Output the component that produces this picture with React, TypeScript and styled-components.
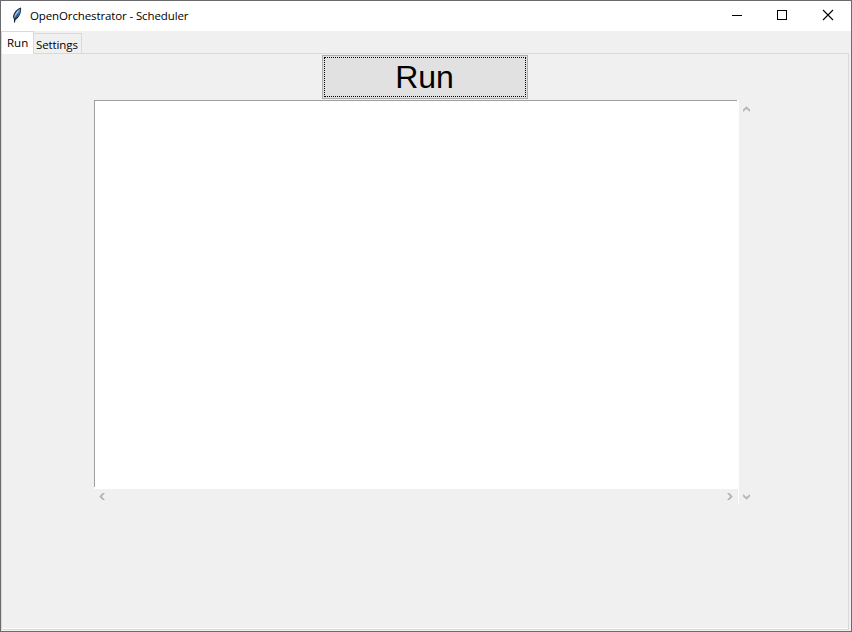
import React from "react";
import styled, { createGlobalStyle } from "styled-components";

const GlobalStyle = createGlobalStyle`
  * { box-sizing: border-box; }
  body { margin: 0; background: #f0f0f0; }
`;

const Window = styled.div`
  width: 852px;
  height: 632px;
  display: flex;
  flex-direction: column;
  background: #f0f0f0;
  border: 1px solid #6b6a6c;
  overflow: hidden;
  color: #000;
  font: 12px/16px "Open Sans", "Noto Sans", sans-serif;
`;

const TitleBar = styled.header`
  display: flex;
  flex: none;
  height: 30px;
  background: #fff;
  padding-left: 8px;
`;

const AppIcon = styled.svg`
  flex: none;
  width: 16px;
  height: 16px;
  margin-top: 6px;
`;

const Title = styled.span`
  flex: 1;
  margin: 7px 0 0 5px;
  font-size: 11.5px;
  letter-spacing: -0.12px;
  white-space: nowrap;
`;

const Caption = styled.button`
  width: 46px;
  height: 30px;
  padding: 0;
  border: 0;
  background: transparent;
  svg { display: block; }
`;

const Tabs = styled.nav`
  display: flex;
  align-items: flex-end;
  flex: none;
  height: 22px;
`;

const Tab = styled.button<{ $active?: boolean }>`
  width: ${(p) => (p.$active ? 33 : 48)}px;
  height: ${(p) => (p.$active ? 22 : 20)}px;
  padding: ${(p) => (p.$active ? "1px 0 1px 5px" : "2px 0 0 2px")};
  border: 1px solid #d9d9d9;
  border-left-width: ${(p) => (p.$active ? 1 : 0)}px;
  border-bottom: 0;
  background: ${(p) => (p.$active ? "#fff" : "#f0f0f0")};
  color: #000;
  font: inherit;
  font-size: 11.5px;
  line-height: 16px;
  letter-spacing: ${(p) => (p.$active ? "0" : "-0.1px")};
  text-align: left;
  white-space: nowrap;
`;

const TabEdge = styled.div`
  flex: none;
  height: 1px;
  width: 848px;
  border-left: 1px solid #d9d9d9;
  background: linear-gradient(to right, #fff 31px, #d9d9d9 31px);
`;

const Pane = styled.main`
  flex: none;
  width: 848px;
  height: 576px;
  border: 1px solid #d9d9d9;
  border-top: 0;
  box-shadow: inset 0 -1px #fff;
  display: flex;
  flex-direction: column;
  padding: 1px 0 0 92px;
`;

const RunButton = styled.button`
  width: 206px;
  height: 44px;
  margin-left: 228px;
  padding: 1px;
  border: 1px solid #adadad;
  background: #e1e1e1;
  color: #000;
  font: 32px/38px "Liberation Sans", Arial, sans-serif;
`;

const FocusRing = styled.span`
  display: block;
  height: 40px;
  padding-right: 1px;
  border: 1px dotted #000;
`;

const Output = styled.div`
  display: grid;
  grid-template-columns: 645px 15px;
  grid-template-rows: 389px 15px;
  margin-top: 1px;
`;

const TextBox = styled.div`
  background:
    linear-gradient(#a0a0a0, #a0a0a0) 0 0 / 643px 1px no-repeat,
    linear-gradient(#a0a0a0, #a0a0a0) 0 0 / 1px 387px no-repeat,
    #fff;
`;

const Scroll = styled.div<{ $vertical?: boolean }>`
  display: flex;
  flex-direction: ${(p) => (p.$vertical ? "column" : "row")};
  justify-content: space-between;
  grid-row: ${(p) => (p.$vertical ? "1 / 3" : "2")};
  grid-column: ${(p) => (p.$vertical ? "2" : "1")};
  padding: ${(p) => (p.$vertical ? "6px 0 4px 4px" : "4px 5px 0 5px")};
  border-right: ${(p) => (p.$vertical ? "0" : "1px solid #fff")};
`;

const turns = { up: 0, right: 90, down: 180, left: 270 };

function Arrow({ dir }: { dir: keyof typeof turns }) {
  return (
    <svg width="7" height="7" viewBox="0 0 7 7">
      <path
        d="M0 3.4L3.5 0.2L7 3.4V6L3.5 3L0 6Z"
        transform={`rotate(${turns[dir]} 3.5 3.5)`}
        fill="#b8b8b8"
      />
    </svg>
  );
}

export default function App() {
  return (
    <>
      <GlobalStyle />
      <Window>
        <TitleBar>
          <AppIcon viewBox="0 0 16 16">
            <path d="M12 .6C8.4 1.4 4.4 5.6 4 10L4.9 12L5 15.5H6L6.5 12.7C9.8 11.5 12.8 5.8 12 .6Z" fill="#17212e" />
            <path d="M11.4 1.5C8 3.2 5.2 6.6 4.9 10.6L6 11.6C9.2 10.2 11.8 6 11.4 1.5Z" fill="#4b7fbd" />
            <path d="M10.7 2.2C7.8 4 5.7 6.8 5.3 10.2L9.2 5.3Z" fill="#9cc6f0" />
            <path d="M5.5 13L9.2 6.5" stroke="#17212e" strokeWidth=".6" />
          </AppIcon>
          <Title>OpenOrchestrator - Scheduler</Title>
          <Caption aria-label="Minimize">
            <svg width="46" height="30" shapeRendering="crispEdges"><path d="M19 14.5h10" stroke="#000" /></svg>
          </Caption>
          <Caption aria-label="Maximize">
            <svg width="46" height="30" shapeRendering="crispEdges"><path d="M18.5 9.5h9v9h-9z" fill="none" stroke="#000" /></svg>
          </Caption>
          <Caption aria-label="Close">
            <svg width="46" height="30"><path d="M18 9l10 10M28 9l-10 10" stroke="#000" strokeWidth="1.1" /></svg>
          </Caption>
        </TitleBar>
        <Tabs>
          <Tab $active>Run</Tab>
          <Tab>Settings</Tab>
        </Tabs>
        <TabEdge />
        <Pane>
          <RunButton><FocusRing>Run</FocusRing></RunButton>
          <Output>
            <TextBox />
            <Scroll $vertical><Arrow dir="up" /><Arrow dir="down" /></Scroll>
            <Scroll><Arrow dir="left" /><Arrow dir="right" /></Scroll>
          </Output>
        </Pane>
      </Window>
    </>
  );
}
